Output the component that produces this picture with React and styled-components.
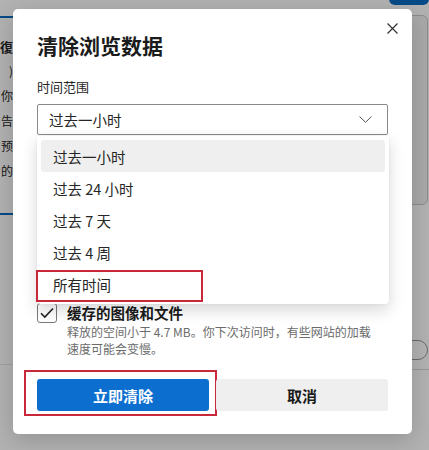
import React from 'react'
import styled, { createGlobalStyle } from 'styled-components'

const GlobalStyle = createGlobalStyle`
  html, body {
    margin: 0;
    padding: 0;
    background: #ffffff;
  }
  body {
    font-family: "Noto Sans CJK SC", "Noto Sans", sans-serif;
    color: #1a1a1a;
  }
`

const Screen = styled.div`
  position: relative;
  width: 429px;
  height: 450px;
  overflow: hidden;
`

// 背景的设置页（被遮罩压暗）
const BackPage = styled.div`
  display: flex;
  width: 100%;
  height: 100%;
  background: #ffffff;
`

const LeftPane = styled.div`
  width: 13px;
  display: flex;
  flex-direction: column;
  overflow: hidden;
`

const BlueRule = styled.div`
  height: 2px;
  background: #0a6bc2;
  margin-top: ${(p) => p.top}px;
  flex-shrink: 0;
`

const PageLine = styled.div`
  font-size: ${(p) => (p.big ? 13 : 12)}px;
  font-weight: ${(p) => (p.big ? 700 : 400)};
  line-height: ${(p) => (p.big ? 30 : 25)}px;
  white-space: nowrap;
  text-align: right;
  color: #262626;
  margin-top: ${(p) => p.top || 0}px;
`

const PageDivider = styled.div`
  margin-top: auto;
  margin-bottom: 85px;
  height: 1px;
  background: #e6e6e6;
`

const RightPane = styled.div`
  margin-left: auto;
  width: 40px;
  display: flex;
  flex-direction: column;
  align-items: flex-end;
`

const TopPill = styled.div`
  width: 40px;
  height: 6px;
  margin-top: -1px;
  border-radius: 0 0 8px 8px;
  background: #0a6bc2;
`

const SideCard = styled.div`
  width: 40px;
  height: 190px;
  margin-top: 10px;
  margin-right: 1px;
  box-sizing: border-box;
  border: 1px solid #c9c9c9;
  border-radius: 6px;
  background: #f3f3f3;
`

const ToggleOutline = styled.div`
  width: 40px;
  height: 20px;
  margin-top: 135px;
  margin-right: 1px;
  box-sizing: border-box;
  border: 1px solid #9a9a9a;
  border-radius: 10px;
`

const RightDivider = styled.div`
  width: 40px;
  height: 1px;
  margin-top: 9px;
  background: #d8d8d8;
`

const Dim = styled.div`
  position: absolute;
  inset: 0;
  background: rgba(0, 0, 0, 0.3);
`

// 对话框
const Dialog = styled.div`
  position: absolute;
  left: 13px;
  top: 9px;
  width: 399px;
  box-sizing: border-box;
  padding: 22px 24px 23px;
  background: #ffffff;
  border-radius: 5px;
  box-shadow: 0 6px 24px rgba(0, 0, 0, 0.18);
  display: flex;
  flex-direction: column;
`

const CloseButton = styled.button`
  position: absolute;
  top: 11px;
  right: 12px;
  width: 16px;
  height: 16px;
  padding: 0;
  border: none;
  background: transparent;
  display: flex;
  align-items: center;
  justify-content: center;
`

const Title = styled.h1`
  margin: 0;
  font-size: 21px;
  line-height: 28px;
  font-weight: 700;
  color: #1b1b1b;
`

const Label = styled.div`
  margin-top: 19px;
  font-size: 13px;
  line-height: 18px;
  color: #262626;
`

const SelectWrap = styled.div`
  position: relative;
  margin-top: 8px;
`

const SelectBox = styled.div`
  height: 31px;
  box-sizing: border-box;
  border: 1px solid #8a8a8a;
  border-radius: 2px;
  padding: 0 15px 0 11px;
  display: flex;
  align-items: center;
  justify-content: space-between;
  font-size: 14.5px;
  color: #262626;
`

const Menu = styled.div`
  position: absolute;
  z-index: 2;
  left: 0;
  right: -1px;
  top: calc(100% + 1px);
  padding: 4px 4px 4px;
  background: #ffffff;
  border-radius: 0 0 4px 4px;
  box-shadow: 0 6px 16px rgba(0, 0, 0, 0.16), 0 0 2px rgba(0, 0, 0, 0.08);
`

const MenuItem = styled.div`
  position: relative;
  height: 32px;
  display: flex;
  align-items: center;
  padding-left: 12px;
  border-radius: 3px;
  font-size: 14.5px;
  color: #262626;
  background: ${(p) => (p.active ? '#efefef' : 'transparent')};
`

const Highlight = styled.div`
  position: absolute;
  box-sizing: border-box;
  border: 2px solid #c8283a;
  left: ${(p) => p.left}px;
  top: ${(p) => p.top}px;
  width: ${(p) => p.width}px;
  height: ${(p) => p.height}px;
  pointer-events: none;
`

const Option = styled.div`
  margin-top: 168px;
  display: flex;
  gap: 10px;
`

const Check = styled.div`
  width: 20px;
  height: 20px;
  flex-shrink: 0;
  box-sizing: border-box;
  border: 1px solid #7a7a7a;
  border-radius: 3px;
  display: flex;
  align-items: center;
  justify-content: center;
`

const OptionText = styled.div`
  display: flex;
  flex-direction: column;
`

const OptionTitle = styled.div`
  font-size: 14.5px;
  line-height: 20px;
  font-weight: 700;
  color: #1b1b1b;
`

const OptionDesc = styled.div`
  font-size: 12px;
  line-height: 17px;
  color: #6b6b6b;
  padding-right: 4px;
`

const Buttons = styled.div`
  margin-top: 22px;
  display: grid;
  grid-template-columns: 1fr 1fr;
  gap: 7px;
`

const Button = styled.button`
  position: relative;
  height: 32px;
  border: none;
  border-radius: 3px;
  font-family: inherit;
  font-size: 15px;
  font-weight: 700;
  color: ${(p) => (p.primary ? '#ffffff' : '#1b1b1b')};
  background: ${(p) => (p.primary ? '#0c6fd0' : '#efefef')};
`

const ranges = ['过去一小时', '过去 24 小时', '过去 7 天', '过去 4 周', '所有时间']

export default function App() {
  return (
    <Screen>
      <GlobalStyle />
      <BackPage>
        <LeftPane>
          <BlueRule top={16} />
          <PageLine big top={14}>復</PageLine>
          <PageLine top={-4}>)</PageLine>
          <PageLine>你</PageLine>
          <PageLine>告</PageLine>
          <PageLine>预</PageLine>
          <PageLine>的</PageLine>
          <BlueRule top={30} />
          <PageDivider />
        </LeftPane>
        <RightPane>
          <TopPill />
          <SideCard />
          <ToggleOutline />
          <RightDivider />
        </RightPane>
      </BackPage>
      <Dim />
      <Dialog>
        <CloseButton aria-label="关闭">
          <svg width="11" height="11" viewBox="0 0 11 11">
            <path d="M0.5 0.5 L10.5 10.5 M10.5 0.5 L0.5 10.5" stroke="#333" strokeWidth="1.2" fill="none" />
          </svg>
        </CloseButton>
        <Title>清除浏览数据</Title>
        <Label>时间范围</Label>
        <SelectWrap>
          <SelectBox>
            <span>过去一小时</span>
            <svg width="13" height="7" viewBox="0 0 13 7">
              <path d="M0.5 0.5 L6.5 6.3 L12.5 0.5" stroke="#555" strokeWidth="1" fill="none" />
            </svg>
          </SelectBox>
          <Menu>
            {ranges.map((r, i) => (
              <MenuItem key={r} active={i === 0}>
                {r}
                {i === ranges.length - 1 && (
                  <Highlight left={-5} top={2} width={167} height={32} />
                )}
              </MenuItem>
            ))}
          </Menu>
        </SelectWrap>
        <Option>
          <Check>
            <svg width="14" height="12" viewBox="0 0 14 12">
              <path d="M1 6.2 L4.8 10 L13 1.5" stroke="#222" strokeWidth="1.6" fill="none" />
            </svg>
          </Check>
          <OptionText>
            <OptionTitle>缓存的图像和文件</OptionTitle>
            <OptionDesc>释放的空间小于 4.7 MB。你下次访问时，有些网站的加载<br />速度可能会变慢。</OptionDesc>
          </OptionText>
        </Option>
        <Buttons>
          <Button primary>
            立即清除
            <Highlight left={-13} top={-9} width={193} height={46} />
          </Button>
          <Button>取消</Button>
        </Buttons>
      </Dialog>
    </Screen>
  )
}
